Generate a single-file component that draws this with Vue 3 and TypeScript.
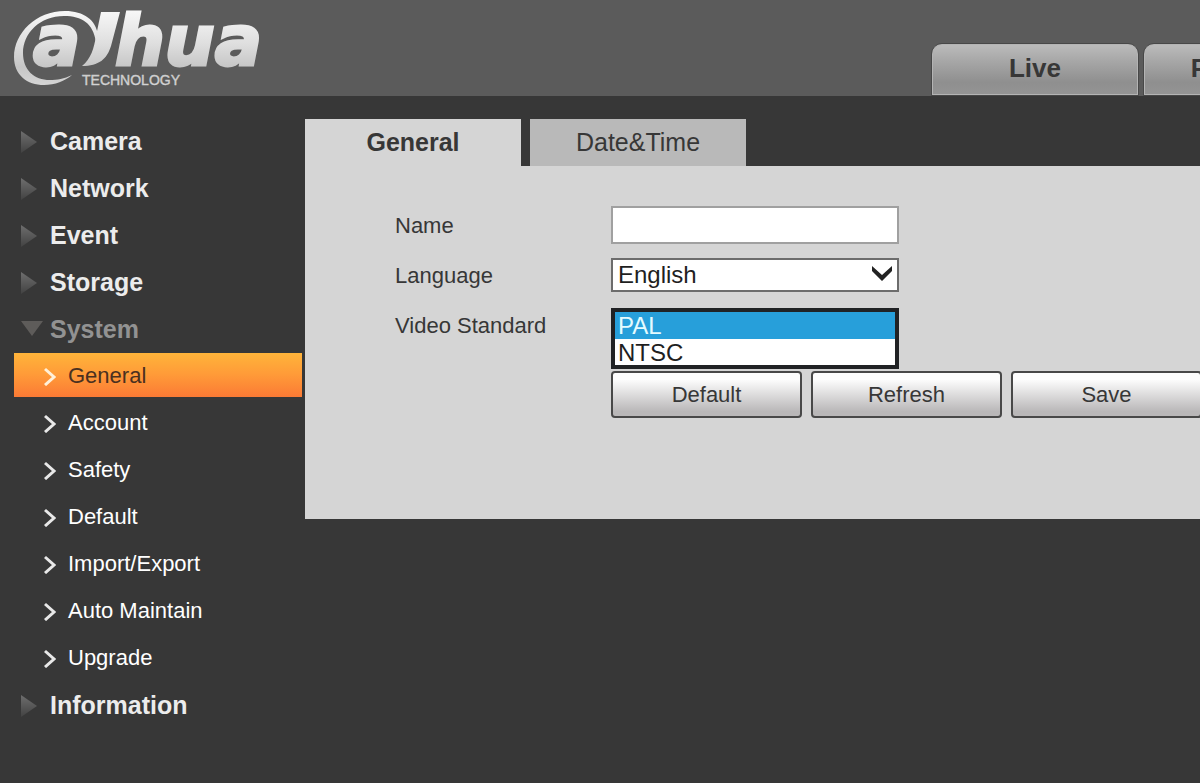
<script setup lang="ts">
import { ref } from 'vue'

interface MenuEntry {
  label: string
  children?: string[]
}

const headerTabs: string[] = ['Live', 'Playback']

const menu: MenuEntry[] = [
  { label: 'Camera' },
  { label: 'Network' },
  { label: 'Event' },
  { label: 'Storage' },
  {
    label: 'System',
    children: ['General', 'Account', 'Safety', 'Default', 'Import/Export', 'Auto Maintain', 'Upgrade'],
  },
  { label: 'Information' },
]

const openGroup = ref('System')
const activePage = ref('General')

const tabs: string[] = ['General', 'Date&Time']
const activeTab = ref('General')

const deviceName = ref('')
const language = ref('English')
const videoStandard = ref('PAL')
const actions: string[] = ['Default', 'Refresh', 'Save']
</script>

<template>
  <div class="page">
    <header class="header">
      <svg class="logo" viewBox="0 0 280 96" role="img" aria-label="alhua Technology">
        <defs>
          <linearGradient id="metal" gradientUnits="userSpaceOnUse" x1="0" y1="10" x2="0" y2="86">
            <stop offset="0" stop-color="#f8f8f8" />
            <stop offset="0.45" stop-color="#dedede" />
            <stop offset="0.75" stop-color="#c6c6c6" />
            <stop offset="1" stop-color="#d6d6d6" />
          </linearGradient>
        </defs>
        <g fill="url(#metal)">
          <path
            d="M98 35 C96 20 84 11 65 11 C36 11 14 33 14 57 C14 75 27 85 44 85 C55 85 65 81 72 75 C64 79 57 80 50 80 C34 80 23 70 23 53 C23 33 40 16 64 16 C82 16 93 23 96 42 Z"
          />
          <path d="M101 12 H120 L111 46 C107 59 99 66 82 66 C91 59 94 48 96 36 Z" />
          <text class="wordmark" x="33" y="65">a</text>
          <text class="wordmark" x="115" y="65">hua</text>
          <text class="tagline" x="82" y="85">TECHNOLOGY</text>
        </g>
      </svg>
      <nav class="header-tabs">
        <button v-for="tab in headerTabs" :key="tab" type="button" class="header-tab">{{ tab }}</button>
      </nav>
    </header>

    <div class="body">
      <nav class="sidebar">
        <ul class="list">
          <li v-for="entry in menu" :key="entry.label">
            <a href="#" class="group" :class="{ open: entry.label === openGroup }" @click.prevent="openGroup = entry.label">
              <svg class="marker" viewBox="0 0 24 24" aria-hidden="true">
                <defs>
                  <linearGradient id="shade" x1="0" y1="0" x2="0" y2="1">
                    <stop offset="0" stop-color="#6e6e6e" />
                    <stop offset="1" stop-color="#424242" />
                  </linearGradient>
                </defs>
                <path v-if="entry.label === openGroup" d="M0 3 H22 L11 18 Z" fill="#5e5c5a" />
                <path v-else d="M0 1 L16 12 L0 23 Z" fill="url(#shade)" />
              </svg>
              {{ entry.label }}
            </a>
            <ul v-if="entry.children && entry.label === openGroup" class="list">
              <li v-for="child in entry.children" :key="child" class="sub-row">
                <a href="#" class="sub" :class="{ active: child === activePage }" @click.prevent="activePage = child">
                  <svg class="chevron" viewBox="0 0 12 20" aria-hidden="true">
                    <path d="M1 3 L10 11 L1 19" fill="none" stroke="currentColor" stroke-width="3" />
                  </svg>
                  {{ child }}
                </a>
              </li>
            </ul>
          </li>
        </ul>
      </nav>

      <main class="content">
        <div class="tabs" role="tablist">
          <button
            v-for="tab in tabs"
            :key="tab"
            type="button"
            role="tab"
            class="tab"
            :class="{ current: tab === activeTab }"
            :aria-selected="tab === activeTab"
            @click="activeTab = tab"
          >
            {{ tab }}
          </button>
        </div>
        <form class="panel" @submit.prevent>
          <div class="row">
            <label class="label" for="name">Name</label>
            <input id="name" v-model="deviceName" class="text" type="text" />
          </div>
          <div class="row">
            <label class="label" for="language">Language</label>
            <div class="picker">
              <select id="language" v-model="language" class="select">
                <option>English</option>
              </select>
              <svg class="arrow" viewBox="0 0 20 15" aria-hidden="true">
                <path d="M0 0 L10 9 L20 0 V5 L10 15 L0 5 Z" fill="#222" />
              </svg>
            </div>
          </div>
          <div class="row tall">
            <label class="label" for="standard">Video Standard</label>
            <select id="standard" v-model="videoStandard" class="listbox" size="2">
              <option>PAL</option>
              <option>NTSC</option>
            </select>
          </div>
          <div class="actions">
            <button v-for="action in actions" :key="action" type="button" class="action">{{ action }}</button>
          </div>
        </form>
      </main>
    </div>
  </div>
</template>

<style>
body {
  background: #373737;
}
</style>

<style scoped>
.page {
  min-height: 100vh;
  overflow: hidden;
  background: #373737;
  font-family: "Liberation Sans", Arial, sans-serif;
  font-size: 22px;
}

button,
input,
select {
  box-sizing: border-box;
  margin: 0;
  font-family: inherit;
}

.header {
  display: flex;
  justify-content: space-between;
  align-items: flex-end;
  height: 96px;
  background: #5b5b5b;
}

.logo {
  flex: none;
  width: 280px;
  height: 96px;
  overflow: visible;
}

.wordmark {
  font: italic bold 70px "DejaVu Sans", sans-serif;
  stroke: url(#metal);
  stroke-width: 3px;
}

.tagline {
  font: 14px "Liberation Sans", sans-serif;
  stroke: #cfcfcf;
  stroke-width: 0.4px;
}

.header-tabs {
  display: flex;
  gap: 4px;
  width: 269px;
  overflow: hidden;
}

.header-tab {
  flex: none;
  width: 208px;
  height: 53px;
  padding: 0 0 2px;
  border: 1px solid #484848;
  border-radius: 11px 11px 0 0;
  background: linear-gradient(#bcbcbc, #a6a6a6 35%, #8f8f8f 75%, #949494);
  box-shadow: inset 0 0 0 1px #b4b4b4;
  color: #373737;
  font-size: 26px;
  font-weight: bold;
}

.body {
  display: flex;
}

.sidebar {
  flex: none;
  width: 305px;
  padding-top: 22px;
}

.list {
  margin: 0;
  padding: 0;
  list-style: none;
}

.group {
  display: flex;
  align-items: center;
  gap: 5px;
  height: 47px;
  padding-left: 21px;
  color: #ececec;
  font-size: 25px;
  font-weight: bold;
  text-decoration: none;
}

.group.open {
  color: #929292;
}

.marker {
  width: 24px;
  height: 24px;
}

.sub-row {
  display: flex;
  align-items: flex-start;
  height: 47px;
  padding: 0 3px 0 14px;
}

.sub {
  display: flex;
  flex: 1;
  align-items: center;
  gap: 12px;
  box-sizing: border-box;
  height: 44px;
  padding: 2px 0 0 30px;
  color: #fff;
  text-decoration: none;
}

.sub.active {
  background: linear-gradient(#ffb43a, #ff9a38 50%, #fb7a35);
  color: #4a3020;
}

.chevron {
  width: 12px;
  height: 20px;
  color: #e8e8e8;
}

.active .chevron {
  color: #fff0d8;
}

.content {
  flex: 1;
  min-width: 0;
  padding-top: 23px;
}

.tabs {
  display: flex;
  gap: 9px;
}

.tab {
  width: 216px;
  height: 47px;
  padding: 0;
  border: 0;
  background: #b9b9b9;
  color: #373737;
  font-size: 25px;
}

.tab.current {
  background: #d5d5d5;
  font-weight: bold;
}

.panel {
  padding: 34px 0 101px 90px;
  overflow: hidden;
  background: #d5d5d5;
  color: #373737;
}

.row {
  display: grid;
  grid-template-columns: 216px 288px;
  align-items: center;
  height: 50px;
}

.label {
  padding-top: 2px;
}

.tall {
  align-items: start;
  height: 71px;
}

.tall .label {
  padding-top: 13px;
}

.text {
  height: 38px;
  padding: 0 6px;
  border: 2px solid #a0a0a0;
  background: #fff;
  font-size: 24px;
}

.picker {
  position: relative;
  height: 34px;
}

.select {
  width: 100%;
  height: 34px;
  padding: 0 5px 2px;
  border: 2px solid #6c6c6c;
  border-radius: 0;
  appearance: none;
  background: #fff;
  color: #1f1f1f;
  font-size: 24px;
}

.arrow {
  position: absolute;
  top: 8px;
  right: 7px;
  width: 20px;
  height: 15px;
  pointer-events: none;
}

.listbox {
  height: 61px;
  margin-top: 8px;
  padding: 0;
  border: 4px solid #202224;
  border-radius: 0;
  overflow: hidden;
  background: #fff;
  color: #1f1f1f;
  font-size: 24px;
}

.listbox option {
  box-sizing: border-box;
  height: 27px;
  min-height: 0;
  padding: 0 3px;
  line-height: 25px;
}

.listbox option:checked {
  background: linear-gradient(#279fda, #279fda);
  -webkit-text-fill-color: #e4fbff;
}

.actions {
  display: flex;
  gap: 9px;
  padding-left: 216px;
}

.action {
  flex: none;
  width: 191px;
  height: 47px;
  padding: 0;
  border: 2px solid #484848;
  border-radius: 4px;
  background: linear-gradient(#fdfdfd 15%, #b9b7b8 90%);
  color: #373737;
  font-size: 22px;
}
</style>
